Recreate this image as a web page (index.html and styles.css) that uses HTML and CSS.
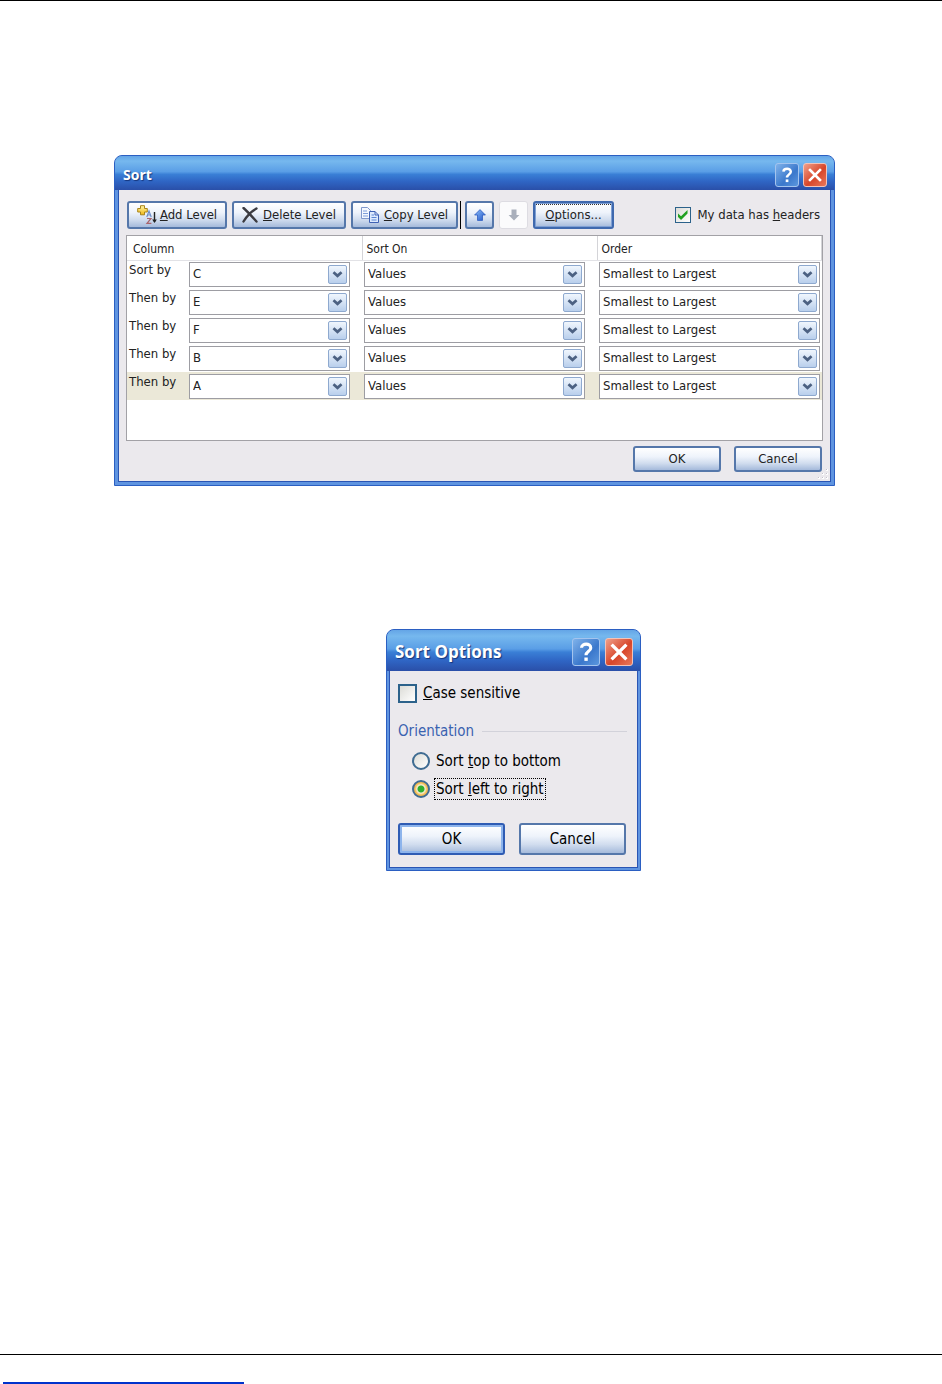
FILE: index.html
```html
<!DOCTYPE html>
<html lang="en">
<head>
    <meta charset="UTF-8">
    <meta name="viewport" content="width=device-width, initial-scale=1.0">
    <title>Sort</title>
    <link rel="stylesheet" href="styles.css">
</head>
<body>
    <!-- Shared shapes -->
    <svg class="shapes" aria-hidden="true">
        <defs>
            <linearGradient id="blueArrow" x1="0" y1="0" x2="1" y2="1">
                <stop offset="0" stop-color="#8fc0fa"/>
                <stop offset="1" stop-color="#1f55c8"/>
            </linearGradient>
            <linearGradient id="goldPlus" x1="0" y1="0" x2="0" y2="1">
                <stop offset="0" stop-color="#fff6a8"/>
                <stop offset="1" stop-color="#f0b814"/>
            </linearGradient>
            <symbol id="chevron" viewBox="0 0 12 10">
                <path d="M1.5 2.5 L6 6.5 L10.5 2.5" fill="none" stroke="#4c6182" stroke-width="3"/>
            </symbol>
            <symbol id="cross" viewBox="0 0 16 16">
                <path d="M3 3 L13 13 M13 3 L3 13" fill="none" stroke="#fff" stroke-width="2.6" stroke-linecap="square"/>
            </symbol>
            <symbol id="question" viewBox="0 0 16 16">
                <path d="M4.4 4.6 C4.6 0.8 11.8 0.6 11.8 4.7 C11.8 7.4 8 7.4 8 10.6" fill="none" stroke="#fff" stroke-width="2.5"/>
                <rect x="6.7" y="12.4" width="2.7" height="2.7" fill="#fff"/>
            </symbol>
        </defs>
    </svg>

    <main>
        <section class="dialog sort-dialog">
            <header class="titlebar">
                <h1>Sort</h1>
                <button type="button" class="title-button help"><svg><use href="#question"/></svg></button>
                <button type="button" class="title-button close"><svg><use href="#cross"/></svg></button>
            </header>
            <div class="dialog-body">
                <div class="toolbar">
                    <button type="button" class="btn add">
                        <svg width="20" height="20" viewBox="0 0 20 20">
                            <path d="M3.5 0.7 H7.5 V3.5 H10.3 V7 H7.5 V9.8 H3.5 V7 H0.7 V3.5 H3.5 Z" fill="url(#goldPlus)" stroke="#a8841c"/>
                            <path d="M9.8 12 L12 6 L14.2 12 M10.5 10 H13.5" fill="none" stroke="#6f8fc8" stroke-width="1.2"/>
                            <path d="M10 13.5 H14 L10 18.3 H14.4" fill="none" stroke="#a8646c" stroke-width="1.2"/>
                            <path d="M17.5 7 V17" stroke="#222" stroke-width="1.4"/>
                            <path d="M15.2 14.4 H19.8 L17.5 18 Z" fill="#222"/>
                        </svg>
                        <span><u>A</u>dd Level</span>
                    </button>
                    <button type="button" class="btn delete">
                        <svg width="16" height="16" viewBox="0 0 16 16">
                            <path d="M1.5 1 C6 5 10 9.5 14.5 14.5 M14.5 1.5 C9 4.5 4.5 9.5 1.5 14.5" fill="none" stroke="#3b3b41" stroke-width="2.4" stroke-linecap="round"/>
                        </svg>
                        <span><u>D</u>elete Level</span>
                    </button>
                    <button type="button" class="btn copy">
                        <svg width="18" height="16" viewBox="0 0 18 16">
                            <path d="M0.5 0.5 H6.5 L9.5 3.5 V11.5 H0.5 Z" fill="#f4f8ff" stroke="#8199cc"/>
                            <path d="M2 4 H6 M2 6.5 H7 M2 9 H7" stroke="#7f9fda"/>
                            <path d="M8.5 4.5 H14 L17.5 8 V15.5 H8.5 Z" fill="#dce9fd" stroke="#3e61b4"/>
                            <path d="M14 4.5 V8 H17.5" fill="none" stroke="#3e61b4"/>
                            <path d="M10.5 8 H13 M10.5 10.5 H15.5 M10.5 13 H15.5" stroke="#5b86d4"/>
                        </svg>
                        <span><u>C</u>opy Level</span>
                    </button>
                    <span class="separator"></span>
                    <button type="button" class="btn arrow">
                        <svg width="12" height="12" viewBox="0 0 12 12">
                            <path d="M6 0.6 L11.4 6 H8.5 V11.4 H3.5 V6 H0.6 Z" fill="url(#blueArrow)" stroke="#2c5cc0" stroke-width="0.8"/>
                        </svg>
                    </button>
                    <button type="button" class="btn arrow" disabled>
                        <svg width="12" height="12" viewBox="0 0 12 12">
                            <path d="M6 11.4 L11.4 6 H8.5 V0.6 H3.5 V6 H0.6 Z" fill="#a9afbb"/>
                        </svg>
                    </button>
                    <button type="button" class="btn options focused"><span><u>O</u>ptions...</span></button>
                    <label class="check">
                        <input type="checkbox" checked>
                        <span>My data has <u>h</u>eaders</span>
                    </label>
                </div>

                <div class="levels">
                    <table>
                        <thead>
                            <tr>
                                <th class="col-column">Column</th>
                                <th class="col-sort-on">Sort On</th>
                                <th class="col-order">Order</th>
                            </tr>
                        </thead>
                        <tbody>
                            <tr>
                                <td>
                                    <div class="level">
                                        <label for="column1">Sort by</label>
                                        <span class="combo"><select id="column1"><option>C</option></select><svg><use href="#chevron"/></svg></span>
                                    </div>
                                </td>
                                <td><span class="combo"><select aria-label="Sort On"><option>Values</option></select><svg><use href="#chevron"/></svg></span></td>
                                <td><span class="combo"><select aria-label="Order"><option>Smallest to Largest</option></select><svg><use href="#chevron"/></svg></span></td>
                            </tr>
                            <tr>
                                <td>
                                    <div class="level">
                                        <label for="column2">Then by</label>
                                        <span class="combo"><select id="column2"><option>E</option></select><svg><use href="#chevron"/></svg></span>
                                    </div>
                                </td>
                                <td><span class="combo"><select aria-label="Sort On"><option>Values</option></select><svg><use href="#chevron"/></svg></span></td>
                                <td><span class="combo"><select aria-label="Order"><option>Smallest to Largest</option></select><svg><use href="#chevron"/></svg></span></td>
                            </tr>
                            <tr>
                                <td>
                                    <div class="level">
                                        <label for="column3">Then by</label>
                                        <span class="combo"><select id="column3"><option>F</option></select><svg><use href="#chevron"/></svg></span>
                                    </div>
                                </td>
                                <td><span class="combo"><select aria-label="Sort On"><option>Values</option></select><svg><use href="#chevron"/></svg></span></td>
                                <td><span class="combo"><select aria-label="Order"><option>Smallest to Largest</option></select><svg><use href="#chevron"/></svg></span></td>
                            </tr>
                            <tr>
                                <td>
                                    <div class="level">
                                        <label for="column4">Then by</label>
                                        <span class="combo"><select id="column4"><option>B</option></select><svg><use href="#chevron"/></svg></span>
                                    </div>
                                </td>
                                <td><span class="combo"><select aria-label="Sort On"><option>Values</option></select><svg><use href="#chevron"/></svg></span></td>
                                <td><span class="combo"><select aria-label="Order"><option>Smallest to Largest</option></select><svg><use href="#chevron"/></svg></span></td>
                            </tr>
                            <tr class="selected">
                                <td>
                                    <div class="level">
                                        <label for="column5">Then by</label>
                                        <span class="combo"><select id="column5"><option>A</option></select><svg><use href="#chevron"/></svg></span>
                                    </div>
                                </td>
                                <td><span class="combo"><select aria-label="Sort On"><option>Values</option></select><svg><use href="#chevron"/></svg></span></td>
                                <td><span class="combo"><select aria-label="Order"><option>Smallest to Largest</option></select><svg><use href="#chevron"/></svg></span></td>
                            </tr>
                        </tbody>
                    </table>
                </div>

                <div class="actions">
                    <button type="button" class="btn">OK</button>
                    <button type="button" class="btn">Cancel</button>
                </div>
                <svg class="grip" width="12" height="12" viewBox="0 0 12 12">
                    <path d="M9 1h2v2h-2z M5 5h2v2h-2z M9 5h2v2h-2z M1 9h2v2h-2z M5 9h2v2h-2z M9 9h2v2h-2z" fill="#fff"/>
                    <path d="M9 1h1v1h-1z M5 5h1v1h-1z M9 5h1v1h-1z M1 9h1v1h-1z M5 9h1v1h-1z M9 9h1v1h-1z" fill="#c4c1cb"/>
                </svg>
            </div>
        </section>

        <section class="dialog options-dialog">
            <header class="titlebar">
                <h2>Sort Options</h2>
                <button type="button" class="title-button help"><svg><use href="#question"/></svg></button>
                <button type="button" class="title-button close"><svg><use href="#cross"/></svg></button>
            </header>
            <div class="dialog-body">
                <label class="check">
                    <input type="checkbox">
                    <span><u>C</u>ase sensitive</span>
                </label>
                <fieldset>
                    <legend>Orientation</legend>
                    <label class="radio">
                        <input type="radio" name="orientation">
                        <span>Sort <u>t</u>op to bottom</span>
                    </label>
                    <label class="radio">
                        <input type="radio" name="orientation" checked>
                        <span class="focus-ring">Sort <u>l</u>eft to right</span>
                    </label>
                </fieldset>
                <div class="actions">
                    <button type="button" class="btn default">OK</button>
                    <button type="button" class="btn">Cancel</button>
                </div>
            </div>
        </section>
    </main>

    <footer>
        <a href="#"></a>
    </footer>
</body>
</html>
```

FILE: styles.css
```css
* {
    box-sizing: border-box;
}
body {
    margin: 0;
    min-height: 100vh;
    display: flex;
    flex-direction: column;
    border-top: 1px solid #000;
    background: #fff;
    color: #222;
    font-family: "DejaVu Sans Condensed", "Noto Sans", sans-serif;
    font-size: 13px;
    line-height: 16px;
}
button, select, input {
    font: inherit;
    color: inherit;
    margin: 0;
}
.shapes {
    position: absolute;
    width: 0;
    height: 0;
}
main {
    padding: 154px 107px 0 114px;
}

/* Windows */
.dialog {
    border: 1px solid #2b5fc2;
    border-radius: 8px 8px 0 0;
    background: #5f94e0;
    overflow: hidden;
}
.titlebar {
    display: flex;
    align-items: center;
    gap: 4px;
    height: 34px;
    padding: 3px 7px 0 8px;
    background: linear-gradient(#64a5e6, #76b8ee 15%, #5a9ee6 46%, #3a7fd6 54%, #2f65c4 75%, #2a4fa8);
}
.titlebar h1, .titlebar h2 {
    flex: 1;
    margin: 0;
    color: #fff;
    font-family: "Open Sans", sans-serif;
    font-size: 14px;
    font-weight: bold;
    text-shadow: 1px 1px 1px #15357c;
}
.title-button {
    display: flex;
    align-items: center;
    justify-content: center;
    width: 24px;
    height: 24px;
    padding: 0;
    border: 1px solid #a4c4ee;
    border-radius: 3px;
    background: linear-gradient(135deg, #7fb2ea, #3b78cc 60%, #5b97de);
}
.title-button svg {
    width: 16px;
    height: 16px;
}
.title-button.close {
    border-color: #f3c3b8;
    background: linear-gradient(135deg, #f0a08a, #d8462a 55%, #e8785a);
}
.dialog-body {
    position: relative;
    margin: 0 3px 3px;
    padding: 11px 7px 9px;
    border: 1px solid #2a55b4;
    border-top: none;
    background: #ebe9ed;
}

/* Buttons */
.btn {
    display: flex;
    align-items: center;
    justify-content: center;
    padding: 0;
    border: 2px solid #5577aa;
    border-radius: 3px;
    background: linear-gradient(#fff, #eef3fb 40%, #d0dcee 70%, #a5badb);
    white-space: nowrap;
}
.btn:disabled {
    border: 1px solid #dddce2;
    background: #fbfbfc;
}
.btn.default {
    border-color: #2f5cb4;
    box-shadow: inset 0 0 0 2px #8db4ec;
}
.btn.focused {
    border-color: #3f69ae;
    box-shadow: inset 0 0 0 1px #7fa0d4;
}
.toolbar {
    display: flex;
    align-items: center;
    gap: 5px;
    padding: 0 3px 0 1px;
}
.toolbar .btn {
    height: 28px;
    gap: 3px;
}
.toolbar .add {
    width: 100px;
}
.toolbar .delete {
    width: 114px;
    gap: 5px;
}
.toolbar .copy {
    width: 107px;
    gap: 5px;
}
.toolbar .arrow {
    width: 29px;
}
.toolbar .options {
    width: 81px;
}
.separator {
    align-self: stretch;
    width: 1px;
    margin: 0 -1px 0 -3px;
    background: #000;
}
.options span {
    flex: 1;
    margin: 1px;
    padding: 2px 0 3px;
    border-top: 1px dotted #333;
}

/* Tick boxes and radio buttons */
.check, .radio {
    display: flex;
    align-items: center;
    gap: 6px;
    white-space: nowrap;
}
.toolbar .check {
    margin-left: auto;
    gap: 7px;
}
input[type="checkbox"] {
    appearance: none;
    width: 16px;
    height: 16px;
    border: 1px solid #2c628b;
    background: linear-gradient(135deg, #dcdcd7, #fff);
}
input[type="checkbox"]:checked::before {
    content: "";
    display: block;
    width: 10px;
    height: 10px;
    margin: 2px;
    background: #21a121;
    clip-path: polygon(0 30%, 35% 62%, 100% 0, 100% 36%, 35% 100%, 0 66%);
}
input[type="radio"] {
    appearance: none;
    width: 18px;
    height: 18px;
    border: 2px solid #3f6c92;
    border-radius: 50%;
    background: linear-gradient(135deg, #dcdcd7, #fff);
}
input[type="radio"]:checked {
    background: radial-gradient(circle, #2fae2f 0 3px, #f4f0d8 4px, #f5bc52 6px);
}

/* Sort levels */
.levels {
    height: 206px;
    margin-top: 6px;
    border: 1px solid #a2a1a6;
    background: #fff;
}
table {
    width: 100%;
    border-collapse: collapse;
    table-layout: fixed;
}
th {
    height: 24px;
    padding: 2px 0 0 4px;
    border-right: 1px solid #d4d4d8;
    border-bottom: 1px solid #e2e2e6;
    font-size: 12px;
    font-weight: normal;
    text-align: left;
}
th:first-child {
    padding-left: 6px;
}
.col-column, .col-sort-on {
    width: 235px;
}
td {
    height: 28px;
    padding: 0 12px 0 2px;
}
td:last-child {
    padding-right: 2px;
}
.selected {
    background: #ebe8d8;
}
.level {
    display: flex;
    justify-content: space-between;
}
.level .combo {
    width: 161px;
}
.combo {
    position: relative;
    display: block;
}
.combo select {
    appearance: none;
    display: block;
    width: 100%;
    height: 25px;
    padding: 0 24px 0 3px;
    border: 1px solid #9d9da3;
    border-radius: 0;
    background: #fff;
}
.combo svg {
    position: absolute;
    top: 3px;
    right: 3px;
    width: 19px;
    height: 19px;
    padding: 4px 3px;
    border: 1px solid #8ea9cf;
    border-radius: 2px;
    background: linear-gradient(#f0f6fd, #b9cfec);
    pointer-events: none;
}
.actions {
    display: flex;
    justify-content: flex-end;
    gap: 13px;
    margin-top: 5px;
    padding-right: 1px;
}
.actions .btn {
    width: 88px;
    height: 26px;
}
.grip {
    position: absolute;
    right: 1px;
    bottom: 1px;
}

/* Sort options */
.options-dialog {
    width: 255px;
    margin: 143px 0 0 272px;
    color: #000;
    font-size: 15px;
    line-height: 20px;
}
.options-dialog .titlebar {
    height: 41px;
    gap: 5px;
    padding: 3px 7px 0 8px;
}
.options-dialog h2 {
    font-size: 17px;
}
.options-dialog .title-button {
    width: 28px;
    height: 28px;
}
.options-dialog .title-button svg {
    width: 20px;
    height: 20px;
}
.options-dialog .dialog-body {
    margin: 0 2px 2px;
    padding: 12px 10px 12px 8px;
}
.options-dialog input[type="checkbox"] {
    width: 19px;
    height: 19px;
    border-width: 2px;
}
fieldset {
    margin: 18px 0 0;
    padding: 0;
    border: none;
}
legend {
    display: flex;
    align-items: center;
    gap: 8px;
    width: 100%;
    margin-bottom: 6px;
    padding: 0;
    color: #3a62b0;
}
legend::after {
    content: "";
    flex: 1;
    height: 1px;
    background: #d2d2da;
}
.radio {
    height: 28px;
    padding-left: 14px;
    gap: 4px;
}
.radio span {
    padding: 0 1px;
    border: 1px dotted transparent;
}
.radio .focus-ring {
    border-color: #000;
}
.options-dialog .actions {
    justify-content: space-between;
    gap: 14px;
    margin-top: 20px;
}
.options-dialog .actions .btn {
    width: 107px;
    height: 32px;
}

footer {
    height: 30px;
    margin-top: auto;
    padding: 27px 3px 0;
    border-top: 1px solid #000;
}
footer a {
    display: block;
    width: 241px;
    border-bottom: 2px solid #0033cc;
}
```
